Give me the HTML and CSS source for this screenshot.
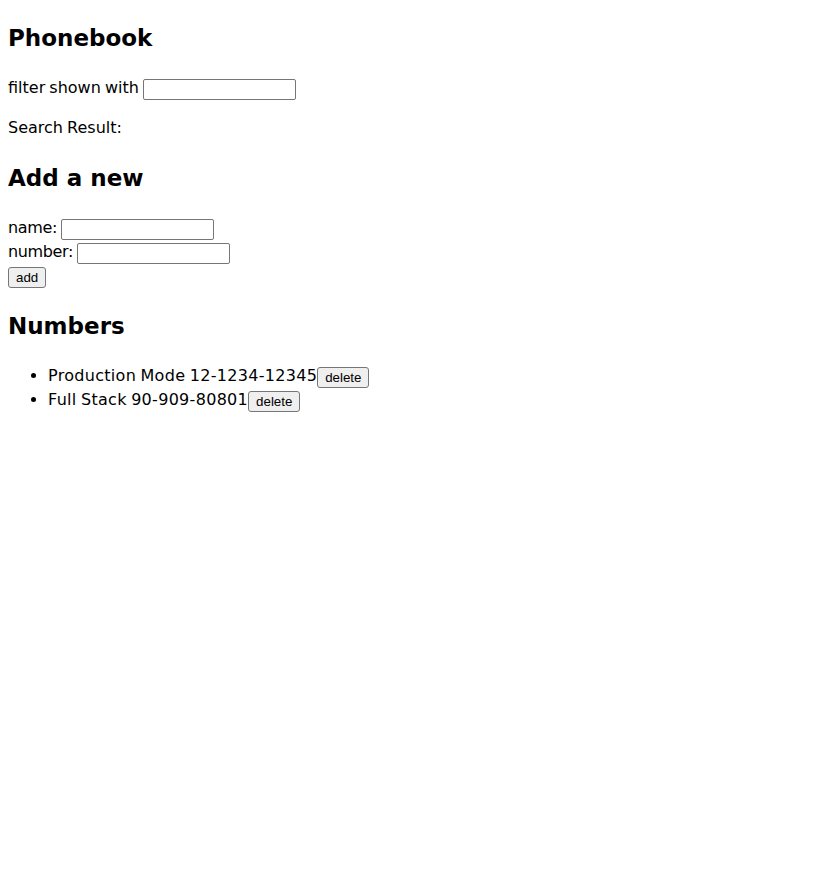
FILE: index.html
```html
<!DOCTYPE html>
<html>
<head>
<meta charset="utf-8">
<link rel="stylesheet" href="styles.css">
</head>
<body class="page">
<div class="app">
  <h2 class="title">Phonebook</h2>
  <p class="line">filter shown with <input class="field" type="text"></p>
  <p class="line">Search Result:</p>
  <h2 class="title">Add a new</h2>
  <form class="form">
    <div class="row">name: <input class="field" type="text"></div>
    <div class="row">number: <input class="field" type="text"></div>
    <div class="row"><button class="btn" type="button">add</button></div>
  </form>
  <h2 class="title">Numbers</h2>
  <ul class="list">
    <li class="item">Production Mode 12-1234-12345<button class="btn" type="button">delete</button></li>
    <li class="item">Full Stack 90-909-80801<button class="btn" type="button">delete</button></li>
  </ul>
</div>
</body>
</html>
```
FILE: styles.css
```css
html, body {
  margin: 0;
  padding: 0;
}
.page {
  font-family: "DejaVu Sans", "Noto Sans", sans-serif;
  font-size: 16px;
  word-spacing: -1px;
  color: #000;
  background: #fff;
}
.app {
  padding: 20px 8px 8px;
}
.title {
  font-size: 23px;
  font-weight: bold;
  word-spacing: 0;
  margin: 20px 0;
  line-height: 36px;
}
.title:first-child {
  margin-top: 0;
}
.line {
  margin: 16px 0;
  line-height: 24px;
}
.form {
  margin: 0;
}
.row {
  line-height: 24px;
  letter-spacing: -0.35px;
}
.field {
  box-sizing: border-box;
  width: 153px;
  height: 21px;
  margin: 0;
  border: 1px solid #767676;
  border-radius: 2px;
  padding: 1px 2px;
  font: 13.33px "Liberation Sans", Arial, sans-serif;
  letter-spacing: 0;
  vertical-align: bottom;
  background: #fff;
}
.btn {
  box-sizing: border-box;
  font: 13.33px "Liberation Sans", Arial, sans-serif;
  letter-spacing: 0;
  word-spacing: 0;
  margin: 0;
  padding: 1px 7px;
  border: 1px solid #767676;
  border-radius: 3px;
  background: #efefef;
  color: #000;
  height: 21px;
  line-height: 17px;
  vertical-align: bottom;
}
.list {
  margin: 19px 0 16px;
  padding-left: 40px;
}
.item {
  line-height: 24px;
  letter-spacing: 0.3px;
}
```
